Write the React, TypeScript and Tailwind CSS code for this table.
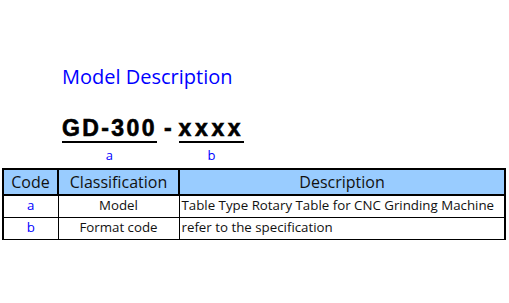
import React from "react";

const ROWS = [
  { code: "a", cls: "Model", desc: "Table Type Rotary Table for CNC Grinding Machine" },
  { code: "b", cls: "Format code", desc: "refer to the specification" },
];

export default function App() {
  return (
    <div className="h-[303px] w-[509px] bg-white font-['Open_Sans',sans-serif]">
      <div className="pl-[62px] pt-[64px]">
        <h1 className="text-[20px] leading-[26px] text-[#0000ff]">Model Description</h1>
        <div className="mt-[26px] flex items-start font-['Liberation_Sans',Arial,sans-serif] text-black">
          <div className="flex flex-col items-center">
            <span className="border-b-2 border-black text-[23px] font-bold leading-[25px] tracking-[2.4px] [-webkit-text-stroke:0.6px_black]">
              GD-300
            </span>
            <span className="mt-[4px] font-['Open_Sans',sans-serif] text-[13px] leading-[16px] text-[#0000ff]">a</span>
          </div>
          <span className="px-[7px] text-[23px] font-bold leading-[25px] [-webkit-text-stroke:0.6px_black]">-</span>
          <div className="flex flex-col items-center">
            <span className="border-b-2 border-black text-[23px] font-bold leading-[25px] tracking-[3.6px] [-webkit-text-stroke:0.6px_black]">
              xxxx
            </span>
            <span className="mt-[4px] font-['Open_Sans',sans-serif] text-[13px] leading-[16px] text-[#0000ff]">b</span>
          </div>
        </div>
      </div>
      <table className="ml-[2px] mt-[5px] w-[504px] table-fixed border-collapse">
        <colgroup>
          <col className="w-[55px]" />
          <col className="w-[121px]" />
          <col />
        </colgroup>
        <thead>
          <tr className="h-[26px] bg-[#99ccff] text-[16px] text-[#111]">
            <th className="border-2 border-black text-center font-normal">Code</th>
            <th className="border-2 border-black text-center font-normal">Classification</th>
            <th className="border-2 border-black text-center font-normal">Description</th>
          </tr>
        </thead>
        <tbody className="text-[13.3px] text-[#111]">
          {ROWS.map((r) => (
            <tr key={r.code} className="h-[22px]">
              <td className="border border-black border-l-2 text-center text-[#0000ff]">{r.code}</td>
              <td className="border border-black text-center">{r.cls}</td>
              <td className="border border-black border-r-2 px-[2px] whitespace-nowrap">{r.desc}</td>
            </tr>
          ))}
        </tbody>
      </table>
    </div>
  );
}
